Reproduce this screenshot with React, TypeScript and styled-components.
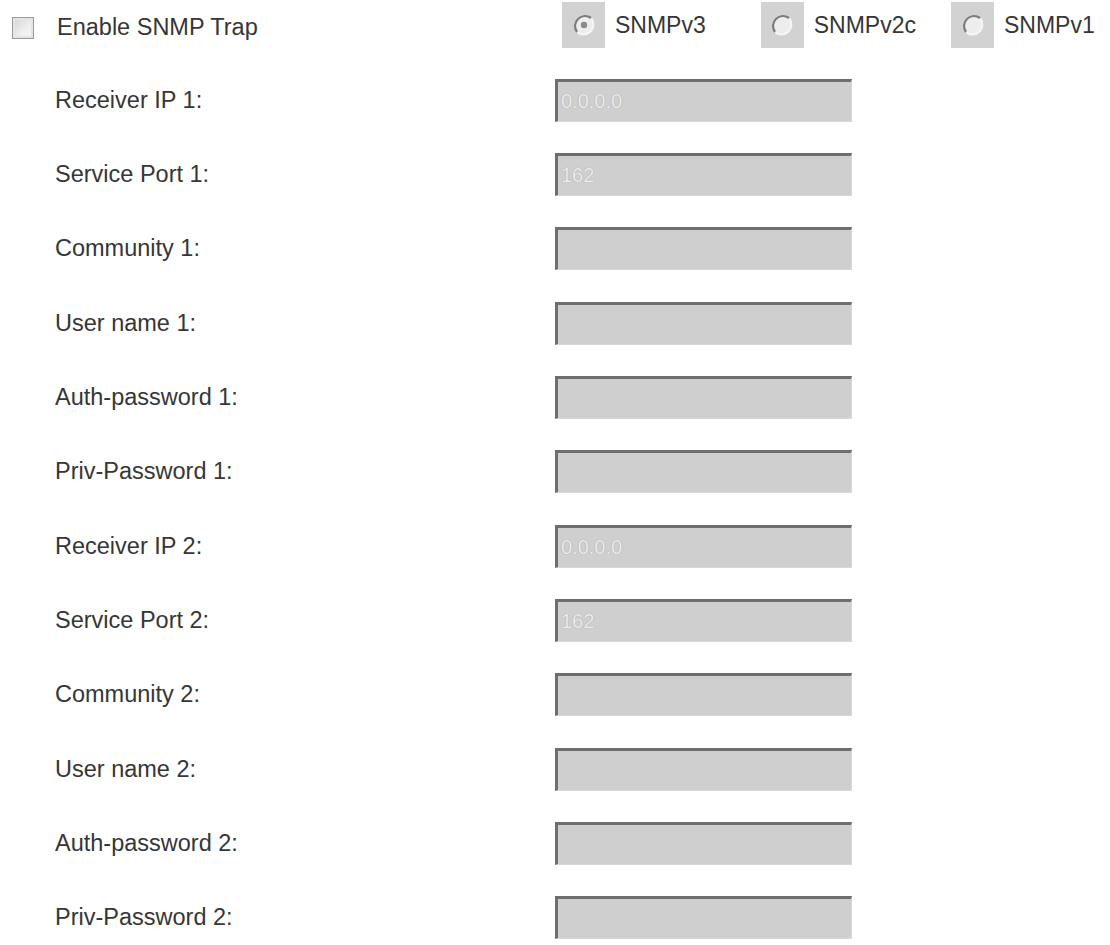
import React from "react";
import styled, { createGlobalStyle } from "styled-components";

const GlobalStyle = createGlobalStyle`
  html, body {
    margin: 0;
    padding: 0;
    background: #ffffff;
  }
  body {
    font-family: "Liberation Sans", Arial, sans-serif;
    color: #363636;
  }
`;

const Page = styled.div`
  width: 1110px;
  height: 945px;
  overflow: hidden;
  background: #ffffff;
`;

const Header = styled.div`
  height: 63px;
  display: flex;
  align-items: flex-start;
`;

const TrapToggle = styled.label`
  display: flex;
  align-items: center;
  gap: 23px;
  padding: 14px 0 0 12px;
  width: 550px;
  font-size: 23.5px;
`;

const CheckBox = styled.span`
  width: 20px;
  height: 20px;
  border: 1px solid #9a9a9a;
  background: linear-gradient(135deg, #d2d2d2 0%, #efefef 60%, #f8f8f8 100%);
  box-shadow: inset 0 0 0 2px #e4e4e4;
`;

const VersionGroup = styled.div`
  display: flex;
  align-items: center;
  padding-top: 2px;
`;

const VersionOption = styled.label<{ $gap: number }>`
  display: flex;
  align-items: center;
  gap: 10px;
  font-size: 23px;
  margin-right: ${(p) => p.$gap}px;
`;

const RadioWell = styled.span`
  width: 43px;
  height: 46px;
  background: #d2d2d2;
  display: flex;
  align-items: center;
  justify-content: center;
`;

const Fields = styled.div`
  display: grid;
  grid-template-columns: 500px 297px;
  grid-auto-rows: 74.33px;
  align-items: center;
  padding-left: 55px;
`;

const FieldLabel = styled.span`
  font-size: 23.5px;
`;

const FieldBox = styled.div`
  box-sizing: border-box;
  height: 43px;
  background: #cfcfcf;
  border-top: 3px solid #6e6e6e;
  border-left: 3px solid #6e6e6e;
  border-right: 1px solid #d8d8d8;
  border-bottom: 1px solid #d8d8d8;
  display: flex;
  align-items: center;
  padding-left: 3px;
  font-size: 20px;
  color: #ededed;
  text-shadow: 0 0 1px #8c8c8c;
`;

const Radio = ({ checked }: { checked?: boolean }) => (
  <svg width="24" height="24" viewBox="0 0 24 24">
    <circle cx="12" cy="12" r="10" fill="#ededed" />
    <path d="M19 5 A10 10 0 0 0 5 19" fill="none" stroke="#7c7c7c" strokeWidth="2.2" />
    <path d="M19.4 5.4 A10 10 0 0 1 5.4 19.4" fill="none" stroke="#f6f6f6" strokeWidth="2" />
    {checked && <circle cx="12" cy="12" r="3.2" fill="#8a8a8a" />}
  </svg>
);

const versions = [
  { name: "SNMPv3", checked: true, gap: 55 },
  { name: "SNMPv2c", checked: false, gap: 35 },
  { name: "SNMPv1", checked: false, gap: 0 },
];

const fields = [
  { label: "Receiver IP 1:", value: "0.0.0.0" },
  { label: "Service Port 1:", value: "162" },
  { label: "Community 1:", value: "" },
  { label: "User name 1:", value: "" },
  { label: "Auth-password 1:", value: "" },
  { label: "Priv-Password 1:", value: "" },
  { label: "Receiver IP 2:", value: "0.0.0.0" },
  { label: "Service Port 2:", value: "162" },
  { label: "Community 2:", value: "" },
  { label: "User name 2:", value: "" },
  { label: "Auth-password 2:", value: "" },
  { label: "Priv-Password 2:", value: "" },
];

export default function App() {
  return (
    <Page>
      <GlobalStyle />
      <Header>
        <TrapToggle>
          <CheckBox />
          Enable SNMP Trap
        </TrapToggle>
        <VersionGroup>
          {versions.map((v) => (
            <VersionOption key={v.name} $gap={v.gap}>
              <RadioWell>
                <Radio checked={v.checked} />
              </RadioWell>
              {v.name}
            </VersionOption>
          ))}
        </VersionGroup>
      </Header>
      <Fields>
        {fields.map((f) => (
          <React.Fragment key={f.label}>
            <FieldLabel>{f.label}</FieldLabel>
            <FieldBox>{f.value}</FieldBox>
          </React.Fragment>
        ))}
      </Fields>
    </Page>
  );
}
